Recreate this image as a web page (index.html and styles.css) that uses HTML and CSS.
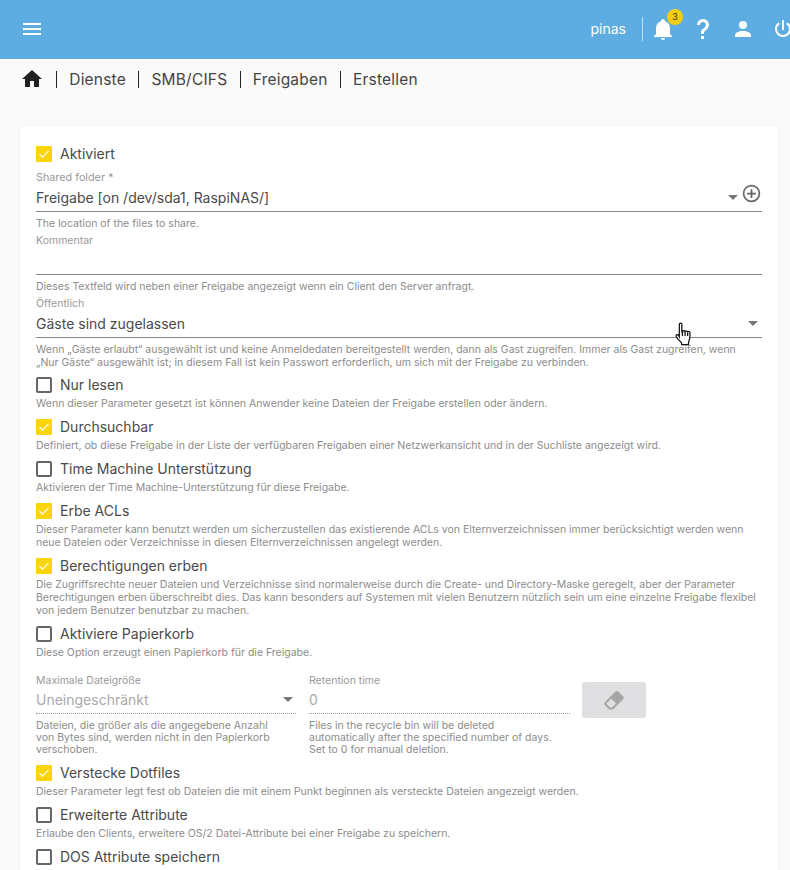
FILE: index.html
```html
<!DOCTYPE html>
<html lang="de">
  <head>
    <meta charset="UTF-8" />
    <title>Freigabe erstellen</title>
    <link rel="stylesheet" href="styles.css">
  </head>

  <body>
    <header class="topbar">
      <svg class="menu-icon" viewBox="0 0 24 24"><path d="M3,6H21V8H3V6M3,11H21V13H3V11M3,16H21V18H3V16Z" /></svg>
      <div class="topbar-right">
        <span class="username">pinas</span>
        <span class="topbar-sep"></span>
        <div class="bell">
          <svg class="bar-icon" viewBox="0 0 24 24"><path d="M21,19V20H3V19L5,17V11C5,7.9 7.03,5.17 10,4.29C10,4.19 10,4.1 10,4A2,2 0 0,1 12,2A2,2 0 0,1 14,4C14,4.1 14,4.19 14,4.29C16.97,5.17 19,7.9 19,11V17L21,19M14,21A2,2 0 0,1 12,23A2,2 0 0,1 10,21" /></svg>
          <span class="badge">3</span>
        </div>
        <svg class="bar-icon" viewBox="0 0 24 24"><path d="M10,19H13V22H10V19M12,2C17.35,2.22 19.68,7.62 16.5,11.67C15.67,12.67 14.33,13.33 13.67,14.17C13,15 13,16 13,17H10C10,15.33 10,13.92 10.67,12.92C11.33,11.92 12.67,11.33 13.5,10.67C15.92,8.43 15.32,5.26 12,5A3,3 0 0,0 9,8H6A6,6 0 0,1 12,2Z" /></svg>
        <svg class="bar-icon" viewBox="0 0 24 24"><path d="M12,4A4,4 0 0,1 16,8A4,4 0 0,1 12,12A4,4 0 0,1 8,8A4,4 0 0,1 12,4M12,14C16.42,14 20,15.79 20,18V20H4V18C4,15.79 7.58,14 12,14Z" /></svg>
        <svg class="bar-icon" viewBox="0 0 24 24"><path d="M16.56,5.44L15.11,6.89C16.84,7.94 18,9.83 18,12A6,6 0 0,1 12,18A6,6 0 0,1 6,12C6,9.83 7.16,7.94 8.88,6.88L7.44,5.44C5.36,6.88 4,9.28 4,12A8,8 0 0,0 12,20A8,8 0 0,0 20,12C20,9.28 18.64,6.88 16.56,5.44M13,3H11V13H13" /></svg>
      </div>
    </header>

    <nav class="breadcrumb">
      <svg class="home-icon" viewBox="0 0 24 24"><path d="M10,20V14H14V20H19V12H22L12,3L2,12H5V20H10Z" /></svg>
      <span class="crumb">Dienste</span>
      <span class="crumb">SMB/CIFS</span>
      <span class="crumb">Freigaben</span>
      <span class="crumb">Erstellen</span>
    </nav>

    <main class="card">
      <div class="check-row">
        <span class="box checked"><svg viewBox="0 0 16 16"><path d="M3.5 8.2l3 3 6-6.4" /></svg></span>
        <span>Aktiviert</span>
      </div>

      <div class="field field-first">
        <div class="field-label">Shared folder *</div>
        <div class="field-value">
          <span>Freigabe [on /dev/sda1, RaspiNAS/]</span>
          <span class="arrow arrow-near"></span>
          <svg class="plus-icon" viewBox="0 0 24 24"><path d="M12,20C7.59,20 4,16.41 4,12C4,7.59 7.59,4 12,4C16.41,4 20,7.59 20,12C20,16.41 16.41,20 12,20M12,2A10,10 0 0,0 2,12A10,10 0 0,0 12,22A10,10 0 0,0 22,12A10,10 0 0,0 12,2M13,7H11V11H7V13H11V17H13V13H17V11H13V7Z" /></svg>
        </div>
      </div>
      <p class="hint hint-field">The location of the files to share.</p>

      <div class="field">
        <div class="field-label">Kommentar</div>
        <div class="field-value"></div>
      </div>
      <p class="hint hint-field">Dieses Textfeld wird neben einer Freigabe angezeigt wenn ein Client den Server anfragt.</p>

      <div class="field">
        <div class="field-label">Öffentlich</div>
        <div class="field-value">
          <span>Gäste sind zugelassen</span>
          <span class="arrow"></span>
        </div>
      </div>
      <p class="hint hint-field">Wenn „Gäste erlaubt“ ausgewählt ist und keine Anmeldedaten bereitgestellt werden, dann als Gast zugreifen. Immer als Gast zugreifen, wenn<br>„Nur Gäste“ ausgewählt ist; in diesem Fall ist kein Passwort erforderlich, um sich mit der Freigabe zu verbinden.</p>

      <div class="check-row">
        <span class="box"></span>
        <span>Nur lesen</span>
      </div>
      <p class="hint">Wenn dieser Parameter gesetzt ist können Anwender keine Dateien der Freigabe erstellen oder ändern.</p>

      <div class="check-row">
        <span class="box checked"><svg viewBox="0 0 16 16"><path d="M3.5 8.2l3 3 6-6.4" /></svg></span>
        <span>Durchsuchbar</span>
      </div>
      <p class="hint">Definiert, ob diese Freigabe in der Liste der verfügbaren Freigaben einer Netzwerkansicht und in der Suchliste angezeigt wird.</p>

      <div class="check-row">
        <span class="box"></span>
        <span>Time Machine Unterstützung</span>
      </div>
      <p class="hint">Aktivieren der Time Machine-Unterstützung für diese Freigabe.</p>

      <div class="check-row">
        <span class="box checked"><svg viewBox="0 0 16 16"><path d="M3.5 8.2l3 3 6-6.4" /></svg></span>
        <span>Erbe ACLs</span>
      </div>
      <p class="hint">Dieser Parameter kann benutzt werden um sicherzustellen das existierende ACLs von Elternverzeichnissen immer berücksichtigt werden wenn neue Dateien oder Verzeichnisse in diesen Elternverzeichnissen angelegt werden.</p>

      <div class="check-row">
        <span class="box checked"><svg viewBox="0 0 16 16"><path d="M3.5 8.2l3 3 6-6.4" /></svg></span>
        <span>Berechtigungen erben</span>
      </div>
      <p class="hint">Die Zugriffsrechte neuer Dateien und Verzeichnisse sind normalerweise durch die Create- und Directory-Maske geregelt, aber der Parameter Berechtigungen erben überschreibt dies. Das kann besonders auf Systemen mit vielen Benutzern nützlich sein um eine einzelne Freigabe flexibel von jedem Benutzer benutzbar zu machen.</p>

      <div class="check-row">
        <span class="box"></span>
        <span>Aktiviere Papierkorb</span>
      </div>
      <p class="hint">Diese Option erzeugt einen Papierkorb für die Freigabe.</p>

      <div class="recycle-row">
        <div class="recycle-col">
          <div class="field-label">Maximale Dateigröße</div>
          <div class="field-value disabled">
            <span>Uneingeschränkt</span>
            <span class="arrow"></span>
          </div>
          <p class="hint hint-col">Dateien, die größer als die angegebene Anzahl von Bytes sind, werden nicht in den Papierkorb verschoben.</p>
        </div>
        <div class="recycle-col">
          <div class="field-label">Retention time</div>
          <div class="field-value disabled"><span>0</span></div>
          <p class="hint hint-col">Files in the recycle bin will be deleted automatically after the specified number of days.<br>Set to 0 for manual deletion.</p>
        </div>
        <button class="eraser-btn" type="button" disabled>
          <svg viewBox="0 0 24 24"><path d="M16.24,3.56L21.19,8.5C21.97,9.29 21.97,10.55 21.19,11.34L12,20.53C10.44,22.09 7.91,22.09 6.34,20.53L2.81,17C2.03,16.21 2.03,14.95 2.81,14.16L13.41,3.56C14.2,2.78 15.46,2.78 16.24,3.56M4.22,15.58L7.76,19.11C8.54,19.9 9.8,19.9 10.59,19.11L14.12,15.58L9.17,10.63L4.22,15.58Z" /></svg>
        </button>
      </div>

      <div class="check-row">
        <span class="box checked"><svg viewBox="0 0 16 16"><path d="M3.5 8.2l3 3 6-6.4" /></svg></span>
        <span>Verstecke Dotfiles</span>
      </div>
      <p class="hint">Dieser Parameter legt fest ob Dateien die mit einem Punkt beginnen als versteckte Dateien angezeigt werden.</p>

      <div class="check-row">
        <span class="box"></span>
        <span>Erweiterte Attribute</span>
      </div>
      <p class="hint">Erlaube den Clients, erweitere OS/2 Datei-Attribute bei einer Freigabe zu speichern.</p>

      <div class="check-row">
        <span class="box"></span>
        <span>DOS Attribute speichern</span>
      </div>
    </main>

    <!-- mouse pointer caught in the screenshot -->
    <svg class="pointer" viewBox="0 0 18 24">
      <path d="M5 2.2c0-1.6 2.4-1.6 2.4 0v7.2l.6-.4c.5-.9 2-.8 2.4.1.6-.7 2-.6 2.4.3.7-.6 2.2-.3 2.4.9.2 2 .2 4.200-.4 6.200-.4 1.400-1 2.200-1 3.600v1.600H7.200v-1.400c-1-1.400-3-3.200-4.600-5.400-.8-1-1-1.800-.5-2.400.6-.6 1.500-.4 2.200.3L5 14V2.200z" />
      <path class="pointer-lines" d="M8 9.500v4M10.500 9.500v4M13 10v3.500" />
    </svg>
  </body>
</html>
```

FILE: styles.css
```css
html,
body {
  height: 100%;
  overflow: hidden;
}

body {
  margin: 0;
  font-family: Inter, "Liberation Sans", sans-serif;
  background-color: #fafafa;
  color: #333;
}

/* Top bar */
.topbar {
  display: flex;
  justify-content: space-between;
  align-items: center;
  box-sizing: border-box;
  width: 802px;
  height: 59px;
  padding: 0 7px 2px 20px;
  background-color: #5dade2;
}

.menu-icon {
  width: 24px;
  height: 24px;
  fill: #fff;
}

.topbar-right {
  display: flex;
  align-items: center;
  gap: 16px;
  color: #fff;
}

.username {
  font-size: 14px;
}

.topbar-sep {
  width: 1px;
  height: 24px;
  margin-right: -8px;
  background-color: rgba(255, 255, 255, 0.6);
}

.bar-icon {
  display: block;
  width: 24px;
  height: 24px;
  fill: #fff;
}

.bell {
  position: relative;
}

.badge {
  position: absolute;
  top: -8px;
  right: -8px;
  width: 16px;
  height: 16px;
  border-radius: 50%;
  background-color: #f5cd0f;
  color: #333;
  font-size: 9px;
  line-height: 16px;
  text-align: center;
}

/* Breadcrumb */
.breadcrumb {
  display: flex;
  align-items: center;
  height: 42px;
  padding: 0 0 2px 20px;
  box-sizing: border-box;
  color: #444;
}

.home-icon {
  width: 24px;
  height: 24px;
  fill: #222;
  margin-right: 12px;
}

.crumb {
  border-left: 1px solid #222;
  padding: 0 12.250px;
  font-size: 15.500px;
  line-height: 17px;
  letter-spacing: 0.2px;
}

/* Card */
.card {
  box-sizing: border-box;
  width: 758px;
  margin: 25px 0 0 20px;
  padding: 18px 16px;
  background-color: #fff;
  border-radius: 4px;
  box-shadow: 0 0 3px rgba(0, 0, 0, 0.08);
}

.check-row {
  display: flex;
  align-items: center;
  gap: 8px;
  height: 20px;
  font-size: 14px;
  color: #4a4a4a;
}

.check-row span:last-child {
  padding-bottom: 1px;
}

.box {
  box-sizing: border-box;
  flex: none;
  width: 16px;
  height: 16px;
  border: 2px solid #666;
  border-radius: 2px;
}

.box.checked {
  border: none;
  border-radius: 1px;
  background-color: #fbd40a;
}

.box svg {
  display: block;
  fill: none;
  stroke: #fff;
  stroke-width: 1.2;
}

.hint {
  margin: 2px 0 7px;
  font-size: 10.500px;
  line-height: 13px;
  color: #8c8c8c;
}

.hint-field {
  margin: 5px 0 4px;
}

.hint-field + .check-row {
  margin-top: 6px;
}

.hint-col {
  max-width: 245px;
  margin: 6px 0 0;
  line-height: 12px;
}

.field-first {
  margin-top: 7px;
}

.field-label {
  font-size: 10.500px;
  line-height: 14px;
  color: #999;
}

.field-first .field-label {
  font-size: 10.800px;
}

.field-value {
  display: flex;
  align-items: center;
  box-sizing: border-box;
  height: 27px;
  padding-bottom: 2px;
  font-size: 14px;
  border-bottom: 1px solid #888;
  color: #4a4a4a;
}

.field-value span:first-child {
  flex: 1;
}

.field-value.disabled {
  height: 26px;
  border-bottom: 1px dotted #999;
  color: #aaa;
}

.arrow {
  width: 0;
  height: 0;
  margin-right: 4px;
  border-left: 5px solid transparent;
  border-right: 5px solid transparent;
  border-top: 5px solid #777;
}

.disabled .arrow {
  margin-right: 3px;
}

.arrow-near {
  margin: 0 3px 0 0;
}

.plus-icon {
  width: 21px;
  height: 21px;
  margin-bottom: 7px;
  fill: #666;
}

.recycle-row {
  display: grid;
  grid-template-columns: 260px 261px 64px;
  gap: 13px;
  margin: 15px 0 7px;
}

.eraser-btn {
  display: flex;
  align-items: center;
  justify-content: center;
  width: 64px;
  height: 36px;
  margin: 8px 0 0 -1px;
  border: none;
  border-radius: 3px;
  background-color: #e0dfe2;
}

.eraser-btn svg {
  width: 24px;
  height: 24px;
  fill: #a6a6a6;
}

/* Mouse pointer */
.pointer {
  position: absolute;
  left: 674px;
  top: 322px;
  width: 19px;
  height: 25px;
  fill: #fff;
  stroke: #111;
  stroke-width: 1.2;
}

.pointer-lines {
  fill: none;
}
```
